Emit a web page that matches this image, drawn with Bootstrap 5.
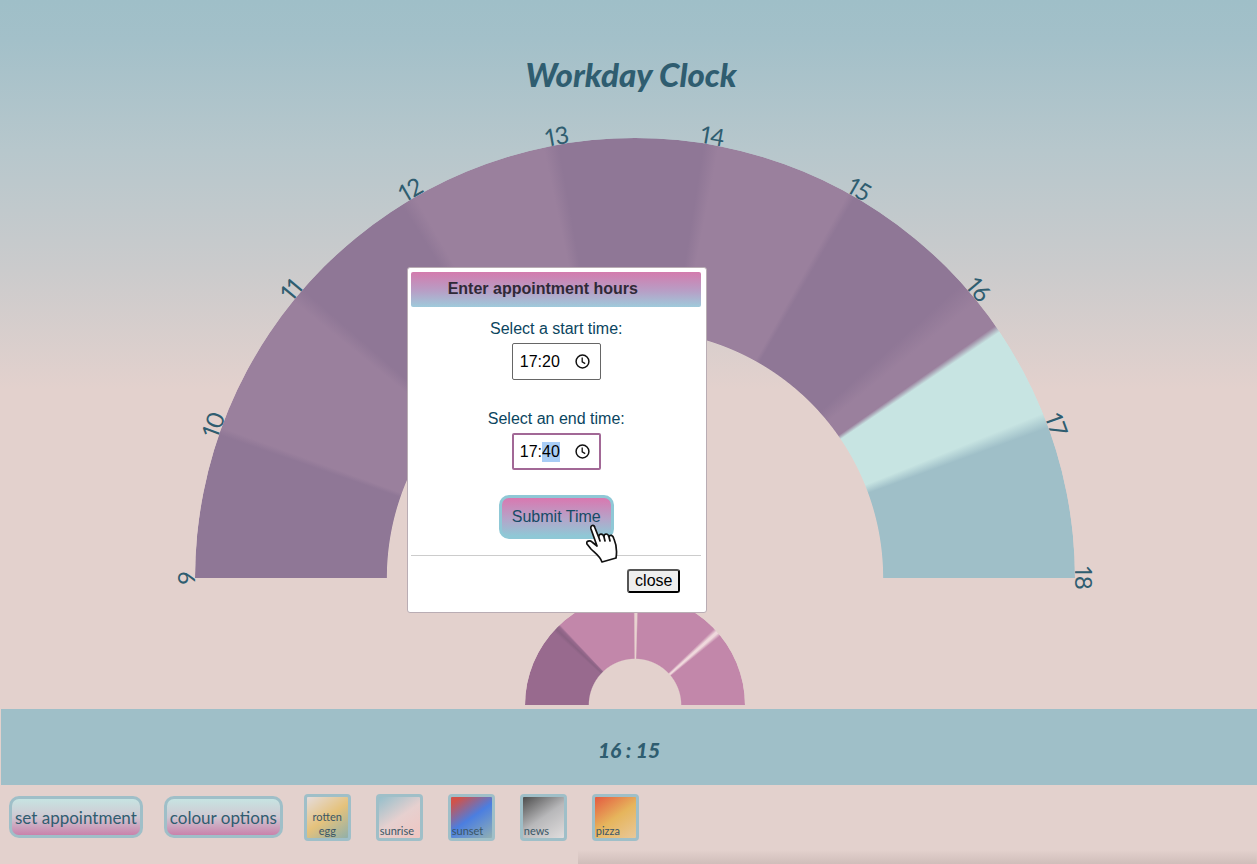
<!DOCTYPE html>
<html lang="en">
<head>
<meta charset="utf-8">
<meta name="viewport" content="width=device-width, initial-scale=1">
<title>Workday Clock</title>
<link rel="stylesheet" href="https://cdn.jsdelivr.net/npm/bootstrap@5.3.0/dist/css/bootstrap.min.css">
<style>
  :root { --ink: #2f5d70; --sea: #9fbfc8; --mint: #c7e4e2; --rose: #c287aa; --plum: #8f7796; --plum-light: #9a809d; }
  body {
    color: var(--ink);
    font-family: Lato, "Open Sans", sans-serif;
    background: #e3d1cd linear-gradient(#9fbfc8 0, #a3c0c9 40px, #b7c7cc 150px, #cbcbcc 270px, #e3d1cd 390px) no-repeat;
  }
  .site-title { font-family: Lato, cursive; font-weight: 900; font-style: italic; font-size: 33px; line-height: 40px; padding: 54px 0 0 5px; margin-bottom: 44px; }
  .dials { padding-left: 13px; }
  .dial-wrap { width: 70vw; }
  .dial { aspect-ratio: 2 / 1; border-radius: 50vw 50vw 0 0; }
  .hours {
    background: conic-gradient(from 270deg at 50% 100%,
      var(--plum) 19deg, var(--plum-light) 20deg 39deg, var(--plum) 41deg 58deg,
      var(--plum-light) 60deg 78deg, var(--plum) 80deg 99deg, var(--plum-light) 101deg 119deg,
      var(--plum) 120deg 138deg, var(--plum-light) 141deg 145deg, var(--mint) 146deg 158deg,
      var(--sea) 160deg 180deg, transparent 180deg);
    -webkit-mask-image: radial-gradient(farthest-side circle at 50% 100%, transparent 56.3%, #000 56.5%);
    mask-image: radial-gradient(farthest-side circle at 50% 100%, transparent 56.3%, #000 56.5%);
    position: relative;
  }
  .hour-labels { inset: 0; width: 100%; height: 100%; overflow: visible; }
  .hour-labels text { font-size: 24px; font-weight: 400; fill: var(--ink); text-anchor: middle; font-variant-numeric: proportional-nums; }
  .quarters {
    width: 220px; margin-top: 17px;
    background: conic-gradient(from 270deg at 50% 100%,
      #986a8e 42deg, #8a6283 44deg, #986a8e 46deg, var(--rose) 47deg 89deg, #e8d3d0 90deg 91deg,
      var(--rose) 92deg 136deg, #efd8dc 138deg 139deg, var(--rose) 141deg 180deg, transparent 180deg);
    -webkit-mask-image: radial-gradient(farthest-side circle at 50% 100%, transparent 41.5%, #000 42.5%);
    mask-image: radial-gradient(farthest-side circle at 50% 100%, transparent 41.5%, #000 42.5%);
  }
  .time-bar { background: var(--sea); height: 76px; margin: 4px 0 0 1px; font-size: 21px; font-weight: 900; font-style: italic; padding-top: 6px; }
  .tools { padding: 9px 9px 23px; gap: 21px; background: linear-gradient(transparent, rgba(70, 50, 50, .12)) right bottom / 54% 14px no-repeat; }
  .tool-btn { border: 3px solid var(--sea); border-radius: 10px; height: 42px; padding: 0 3px; font-size: 17px; color: var(--ink); background: linear-gradient(var(--mint), #cfc8d2 50%, #c982ab); }
  .swatches { gap: 25px; }
  .swatch { width: 47px; height: 47px; border: 3px solid var(--sea); border-radius: 4px; font-size: 11px; line-height: 14px; color: #3a5666; padding: 0 1px; }
  .egg { background: linear-gradient(145deg, #e5dcdc, #e5c27c 50%, #91b0a9); }
  .sunrise { background: linear-gradient(145deg, #96bfcb, #e6d0cf 50%, #f0c5c1); }
  .sunset { background: linear-gradient(145deg, #d0524a 10%, #4b7ee0 50%, #91b0b4); }
  .news { background: linear-gradient(145deg, #4d4d4d, #b8b8ba 50%, #e0dddd); }
  .pizza { background: linear-gradient(145deg, #e45a40, #e6b55c 50%, #e9c89a); }
  .appt { position: absolute; top: 267px; left: 32.4%; width: 300px; padding: 4px 5px 19px 3px; border: 1px solid #b9adb4; border-radius: 3px; background: #fff; color: #000; font: 16px/20px "Liberation Sans", Arial, sans-serif; }
  .appt h2 { font-size: 16px; font-weight: 700; line-height: 34px; color: #2f2937; background: linear-gradient(#d37bad, #b79fc6 55%, #9fcadb); border-radius: 2px; padding: 0 27px 1px 0; margin-bottom: 12px; }
  .appt label { color: #0b4560; margin-bottom: 4px; }
  .time-field { width: 89px; height: 37px; border: 1px solid #666; border-radius: 2px; padding: 0 10px 0 7px; margin-bottom: 29px; }
  .time-field.active { border: 2px solid #a26896; padding: 0 9px 0 6px; margin-bottom: 25px; }
  .time-field input { width: 46px; border: 0; padding: 0; outline: 0; background: none; color: #000; caret-color: transparent; }
  .time-field input::selection { background: #a8cdf6; color: #000; }
  .submit { width: 115px; height: 44px; border: 3px solid #8fc8d6; border-radius: 10px; color: #164b66; background: linear-gradient(#d978b0, #b5a4c9 55%, #8fc8d6); padding: 0; }
  .appt-foot { border-top: 1px solid #ccc; margin-top: 16px; padding: 13px 21px 0; }
  .close-btn { width: 53px; height: 24px; padding: 0; line-height: 20px; border: 2px outset #555; border-radius: 3px; background: #eee; color: #000; }
  .hand { position: absolute; left: 178px; top: 256px; width: 34px; height: 40px; }
</style>
</head>
<body>
<main>
  <h1 class="site-title text-center">Workday Clock</h1>
  <section class="dials d-flex flex-column align-items-center" aria-label="Workday dials">
    <div class="dial-wrap position-relative">
      <svg class="hour-labels position-absolute" viewBox="0 0 880 440" aria-hidden="true"></svg>
      <div class="dial hours"></div>
    </div>
    <div class="dial quarters"></div>
  </section>
  <div class="time-bar d-flex align-items-center justify-content-center">16 : 15</div>
  <div class="tools d-flex flex-wrap align-items-center">
    <button class="tool-btn" type="button">set appointment</button>
    <button class="tool-btn" type="button">colour options</button>
    <div class="swatches d-flex">
      <button class="swatch egg d-flex align-items-end" type="button">rotten egg</button>
      <button class="swatch sunrise d-flex align-items-end" type="button">sunrise</button>
      <button class="swatch sunset d-flex align-items-end" type="button">sunset</button>
      <button class="swatch news d-flex align-items-end" type="button">news</button>
      <button class="swatch pizza d-flex align-items-end" type="button">pizza</button>
    </div>
  </div>
</main>

<form class="appt" role="dialog" aria-labelledby="appt-title">
  <h2 id="appt-title" class="text-center">Enter appointment hours</h2>
  <div class="d-flex flex-column align-items-center">
    <label for="start">Select a start time:</label>
    <div class="time-field d-flex align-items-center justify-content-between">
      <input id="start" type="text" value="17:20">
      <svg width="15" height="15" viewBox="0 0 15 15" fill="none" stroke="#111" stroke-width="1.5"><circle cx="7.500" cy="7.500" r="6.400"/><path d="M7.200 3.500V7.800L10.200 9.600" stroke-width="1.300"/></svg>
    </div>
    <label for="end">Select an end time:</label>
    <div class="time-field active d-flex align-items-center justify-content-between">
      <input id="end" type="text" value="17:40">
      <svg width="15" height="15" viewBox="0 0 15 15" fill="none" stroke="#111" stroke-width="1.5"><circle cx="7.500" cy="7.500" r="6.400"/><path d="M7.200 3.500V7.800L10.200 9.600" stroke-width="1.300"/></svg>
    </div>
    <button class="submit" type="button">Submit Time</button>
  </div>
  <div class="appt-foot d-flex justify-content-end"><button class="close-btn" type="button">close</button></div>
  <svg class="hand" viewBox="0 0 34 40" fill="#fff" stroke="#111" stroke-width="1.700" stroke-linejoin="round" stroke-linecap="round" aria-hidden="true">
    <path d="M5 5C4 1 8 0 9 4L13 14C12 9 17 9 18 13C18 9 22 9 23 13C24 10 27 11 28 15C31 22 31 28 30 34L16 38C14 32 9 29 5 25L1 20C-.5 17 4 16 6 18L11 23Z" stroke="none"/>
    <path d="M11 22L5 5C4 1 8 0 9 4L13 14L14 17M13 14C12 9 17 9 18 13L19 17M18 13C18 9 22 9 23 13L24 17M23 13C24 10 27 11 28 15C31 22 31 28 30 34L16 38C14 32 9 29 5 25L1 20C-.5 17 4 16 6 18L11 22" fill="none"/>
  </svg>
</form>

<script src="https://cdn.jsdelivr.net/npm/bootstrap@5.3.0/dist/js/bootstrap.bundle.min.js"></script>
<script>
  // Hour labels sit every 20 degrees around the rim.
  const labels = document.querySelector('.hour-labels');
  for (let hour = 9; hour <= 18; hour++) {
    const text = document.createElementNS('http://www.w3.org/2000/svg', 'text');
    text.textContent = hour;
    text.setAttribute('transform', `rotate(${(hour - 9) * 20 - 90} 440 440)`);
    text.setAttribute('x', 440);
    text.setAttribute('y', 0);
    labels.append(text);
  }
  const end = document.getElementById('end');
  end.focus();
  end.setSelectionRange(3, 5);
</script>
</body>
</html>
